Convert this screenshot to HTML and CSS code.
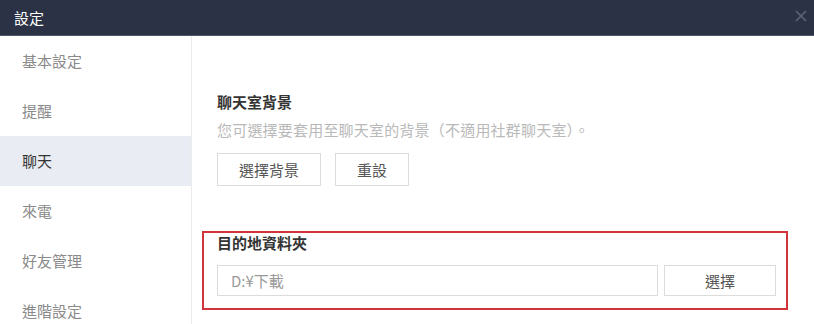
FILE: index.html
```html
<!DOCTYPE html>
<html lang="zh-Hant">
<head>
<meta charset="utf-8">
<title>設定</title>
<link rel="stylesheet" href="styles.css">
</head>
<body>
<div class="window">
  <header class="titlebar">
    <span class="title">設定</span>
    <svg class="close" width="12" height="12" viewBox="0 0 12 12" aria-hidden="true">
      <path d="M1 1 L11 11 M11 1 L1 11" stroke="#5d6475" stroke-width="1.6" fill="none"/>
    </svg>
  </header>
  <div class="main">
    <nav class="sidebar">
      <div class="nav-item">基本設定</div>
      <div class="nav-item">提醒</div>
      <div class="nav-item active">聊天</div>
      <div class="nav-item">來電</div>
      <div class="nav-item">好友管理</div>
      <div class="nav-item">進階設定</div>
    </nav>
    <section class="content">
      <div class="group">
        <h2 class="group-title">聊天室背景</h2>
        <p class="group-desc">您可選擇要套用至聊天室的背景（不適用社群聊天室）。</p>
        <div class="btn-row">
          <button class="btn btn-wide">選擇背景</button>
          <button class="btn btn-narrow">重設</button>
        </div>
      </div>
      <div class="group highlight">
        <h2 class="group-title">目的地資料夾</h2>
        <div class="path-row">
          <div class="path-input">D:¥下載</div>
          <button class="btn btn-choose">選擇</button>
        </div>
      </div>
    </section>
  </div>
</div>
</body>
</html>
```

FILE: styles.css
```css
* {
  box-sizing: border-box;
}

html, body {
  margin: 0;
  padding: 0;
  background: #ffffff;
}

body {
  font-family: "Noto Sans CJK TC", "Noto Sans", "Liberation Sans", sans-serif;
  font-size: 15px;
  color: #333333;
}

.window {
  width: 814px;
  height: 324px;
  overflow: hidden;
  display: flex;
  flex-direction: column;
}

.titlebar {
  height: 36px;
  flex: none;
  background: #2b3245;
  border-bottom: 1px solid #4e5566;
  display: flex;
  align-items: center;
  justify-content: space-between;
  padding: 0 7px 0 14px;
}

.title {
  color: #ffffff;
  font-size: 15px;
  line-height: 20px;
}

.close {
  display: block;
  margin-top: -4px;
}

.main {
  flex: 1;
  display: flex;
  min-height: 0;
}

.sidebar {
  width: 192px;
  flex: none;
  border-right: 1px solid #ebebeb;
  display: flex;
  flex-direction: column;
}

.nav-item {
  height: 50px;
  flex: none;
  display: flex;
  align-items: center;
  padding-left: 22px;
  color: #8a8a8a;
  line-height: 20px;
}

.nav-item.active {
  background: #e9ecf2;
  color: #333333;
}

.content {
  flex: 1;
  padding: 56px 26px 0 10px;
}

.group {
  padding: 0 15px;
}

.group-title {
  margin: 0;
  font-size: 15px;
  line-height: 20px;
  font-weight: 700;
  color: #333333;
}

.group-desc {
  margin: 8px 0 0;
  line-height: 20px;
  color: #b9b9b9;
  letter-spacing: 0.2px;
}

.btn-row {
  display: flex;
  gap: 14px;
  margin-top: 13px;
}

.btn {
  font-family: inherit;
  font-size: 15px;
  height: 33px;
  padding: 0;
  background: #ffffff;
  border: 1px solid #dcdcdc;
  color: #555555;
  line-height: 20px;
  border-radius: 0;
}

.btn-wide {
  width: 104px;
}

.btn-narrow {
  width: 74px;
}

.highlight {
  margin-top: 45px;
  border: 2px solid #d3343c;
  padding: 0 10px 12px 13px;
}

.path-row {
  display: flex;
  gap: 6px;
  margin-top: 12px;
}

.path-input {
  flex: 1;
  height: 31px;
  border: 1px solid #dcdcdc;
  padding-left: 13px;
  display: flex;
  align-items: center;
  color: #9a9a9a;
  line-height: 20px;
}

.btn-choose {
  width: 112px;
  height: 31px;
}
```
